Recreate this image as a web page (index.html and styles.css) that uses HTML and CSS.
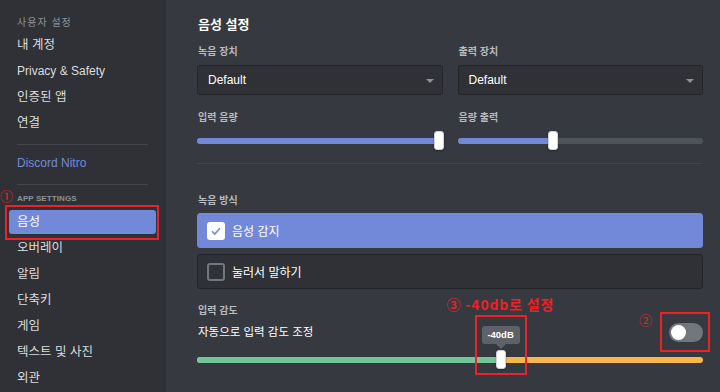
FILE: index.html
```html
<!DOCTYPE html>
<html>
<head>
<link rel="stylesheet" href="styles.css">
</head>
<body>

<div class="app">
    <nav class="sidebar">
        <div class="side-header">사용자 설정</div>
        <div class="side-item">내 계정</div>
        <div class="side-item latin">Privacy &amp; Safety</div>
        <div class="side-item">인증된 앱</div>
        <div class="side-item">연결</div>
        <div class="side-sep"></div>
        <div class="side-item nitro">Discord Nitro</div>
        <div class="side-sep"></div>
        <div class="side-header app-header"><span class="mark mark-one">①</span>APP SETTINGS</div>
        <div class="side-item selected">음성<span class="red-box"></span></div>
        <div class="side-item">오버레이</div>
        <div class="side-item">알림</div>
        <div class="side-item">단축키</div>
        <div class="side-item">게임</div>
        <div class="side-item">텍스트 및 사진</div>
        <div class="side-item">외관</div>
    </nav>

    <main class="content">
        <h2 class="title">음성 설정</h2>

        <div class="field-grid">
            <div class="field">
                <div class="label">녹음 장치</div>
                <div class="select">Default<span class="caret"></span></div>
                <div class="label label-gap">입력 음량</div>
                <div class="slider">
                    <div class="track"><div class="fill" style="width: 98.5%"></div></div>
                    <div class="handle" style="left: 98.5%"></div>
                </div>
            </div>
            <div class="field">
                <div class="label">출력 장치</div>
                <div class="select">Default<span class="caret"></span></div>
                <div class="label label-gap">음량 출력</div>
                <div class="slider">
                    <div class="track"><div class="fill" style="width: 39%"></div></div>
                    <div class="handle" style="left: 39%"></div>
                </div>
            </div>
        </div>

        <div class="divider"></div>

        <div class="label">녹음 방식</div>
        <div class="radio checked">
            <span class="check">
                <svg width="12" height="12" viewBox="0 0 12 12"><path d="M2 6.2 L4.8 9 L10 3.2" fill="none" stroke="#7289da" stroke-width="1.6"/></svg>
            </span>
            음성 감지
        </div>
        <div class="radio">
            <span class="check"></span>
            눌러서 말하기
        </div>

        <div class="label label-sens">입력 감도</div>
        <div class="auto-row">
            <span>자동으로 입력 감도 조정</span>
            <div class="toggle">
                <span class="knob"></span>
                <span class="mark mark-two">②</span>
                <span class="red-box"></span>
            </div>
        </div>
        <div class="slider sens">
            <div class="track sens-track"><div class="fill green" style="width: 60%"></div></div>
            <div class="handle" style="left: 60%">
                <div class="tooltip">-40dB</div>
                <span class="note">③ -40db로 설정</span>
                <span class="red-box"></span>
            </div>
        </div>
    </main>
</div>

</body>
</html>
```

FILE: styles.css
```css
body {
    margin: 0;
    padding: 0;
    width: 720px;
    height: 392px;
    overflow: hidden;
    background-color: #36393f;
    font-family: "Liberation Sans", "Noto Sans CJK KR", sans-serif;
    color: #dcddde;
}

.app {
    display: flex;
    height: 392px;
}

.sidebar {
    display: flex;
    flex-direction: column;
    width: 166px;
    box-sizing: border-box;
    padding: 15px 10px 0 9px;
    background-color: #2f3136;
    flex-shrink: 0;
}

.side-header {
    height: 16px;
    line-height: 16px;
    padding: 0 8px;
    margin-bottom: 2px;
    font-size: 10px;
    letter-spacing: 1px;
    color: #8e9297;
}

.app-header {
    position: relative;
    height: 18px;
    line-height: 18px;
    font-size: 8px;
    font-weight: bold;
    letter-spacing: 0.1px;
}

.side-item {
    position: relative;
    height: 24px;
    line-height: 24px;
    padding: 0 8px;
    margin-bottom: 2px;
    border-radius: 3px;
    font-size: 12.5px;
    color: #dcddde;
}

.side-item.latin,
.side-item.nitro {
    font-size: 12px;
}

.side-item.nitro {
    color: #7289da;
}

.side-item.selected {
    background-color: #7289da;
    color: #fff;
}

.side-sep {
    height: 1px;
    margin: 7px 8px 6px 8px;
    background-color: #42454a;
}

.red-box {
    position: absolute;
    border: 2px solid #ee2124;
}

.side-item .red-box {
    top: -5px;
    left: -4px;
    right: -3px;
    bottom: -6px;
}

.mark {
    position: absolute;
    color: #ee2124;
    font-size: 13px;
    font-family: "Noto Sans CJK KR", sans-serif;
    letter-spacing: 0;
    font-weight: normal;
    line-height: 14px;
}

.mark-one {
    left: -9px;
    top: -1px;
}

.content {
    flex: 1;
    padding: 14px 17px 0 31px;
}

.title {
    margin: 0 0 11px 1px;
    height: 16px;
    padding-top: 2px;
    line-height: 18px;
    font-size: 13px;
    font-weight: bold;
    color: #fff;
}

.field-grid {
    display: grid;
    grid-template-columns: 1fr 1fr;
    column-gap: 15px;
}

.label {
    height: 15px;
    padding-top: 1px;
    line-height: 16px;
    padding-left: 1px;
    font-size: 10px;
    font-weight: bold;
    color: #b9bbbe;
    margin-bottom: 6px;
}

.label-gap {
    margin-top: 14px;
}

.select {
    height: 30px;
    box-sizing: border-box;
    display: flex;
    align-items: center;
    justify-content: space-between;
    padding: 0 8px 0 10px;
    border: 1px solid #222427;
    border-radius: 3px;
    background-color: #2f3136;
    font-size: 12px;
    color: #fff;
}

.caret {
    width: 0;
    height: 0;
    border-left: 4px solid transparent;
    border-right: 4px solid transparent;
    border-top: 4px solid #8e9297;
    margin-top: 1px;
}

.slider {
    position: relative;
    height: 20px;
}

.track {
    position: absolute;
    left: 0;
    right: 0;
    top: 7px;
    height: 6px;
    border-radius: 3px;
    background-color: #4f545c;
    overflow: hidden;
}

.fill {
    height: 100%;
    background-color: #7289da;
}

.sens-track {
    top: 7px;
    background-color: #f8b746;
}

.fill.green {
    background-color: #72c79a;
}

.handle {
    position: absolute;
    top: 0;
    width: 10px;
    height: 19px;
    margin-left: -5px;
    box-sizing: border-box;
    border: 1px solid #cfd1d4;
    border-radius: 3px;
    background-color: #fff;
    box-shadow: 0 1px 2px rgba(0, 0, 0, 0.35);
}

.divider {
    height: 1px;
    margin: 12px 0 28px 0;
    background-color: #42454a;
}

.radio {
    height: 35px;
    box-sizing: border-box;
    display: flex;
    align-items: center;
    gap: 7px;
    padding: 0 9px;
    margin-top: -1px;
    margin-bottom: 7px;
    border: 1px solid #222427;
    border-radius: 3px;
    background-color: #2f3136;
    font-size: 12px;
    color: #fff;
}

.radio.checked {
    border-color: #7289da;
    background-color: #7289da;
}

.check {
    width: 18px;
    height: 18px;
    box-sizing: border-box;
    display: flex;
    align-items: center;
    justify-content: center;
    border: 2px solid #72767d;
    border-radius: 3px;
}

.radio.checked .check {
    border: none;
    background-color: #fff;
}

.label-sens {
    margin-top: 13px;
    margin-bottom: 2px;
}

.auto-row {
    display: flex;
    align-items: center;
    justify-content: space-between;
    height: 21px;
    padding-left: 1px;
    font-size: 11.5px;
    color: #fff;
    margin-bottom: 9px;
}

.toggle {
    position: relative;
    width: 34px;
    height: 19px;
    box-sizing: border-box;
    padding: 2px;
    margin-top: 3px;
    border-radius: 10px;
    background-color: #72767d;
}

.knob {
    display: block;
    width: 15px;
    height: 15px;
    border-radius: 50%;
    background-color: #fff;
}

.toggle .red-box {
    top: -11px;
    left: -9px;
    right: -7px;
    bottom: -10px;
}

.mark-two {
    left: -30px;
    top: -10px;
}

.tooltip {
    position: absolute;
    bottom: 24px;
    left: 50%;
    transform: translateX(-50%);
    width: 38px;
    height: 18px;
    line-height: 18px;
    border-radius: 3px;
    background-color: #5e6268;
    text-align: center;
    font-size: 9.5px;
    font-weight: bold;
    color: #fff;
}

.tooltip::after {
    content: "";
    position: absolute;
    left: 50%;
    top: 18px;
    margin-left: -5px;
    border-left: 5px solid transparent;
    border-right: 5px solid transparent;
    border-top: 5px solid #5e6268;
}

.handle .red-box {
    top: -36px;
    left: -22px;
    right: -22px;
    bottom: -7px;
}

.note {
    position: absolute;
    left: -50px;
    top: -56px;
    white-space: nowrap;
    font-family: "Noto Sans CJK KR", sans-serif;
    font-size: 14px;
    font-weight: bold;
    letter-spacing: 0.8px;
    line-height: 18px;
    color: #ee2124;
}
```
